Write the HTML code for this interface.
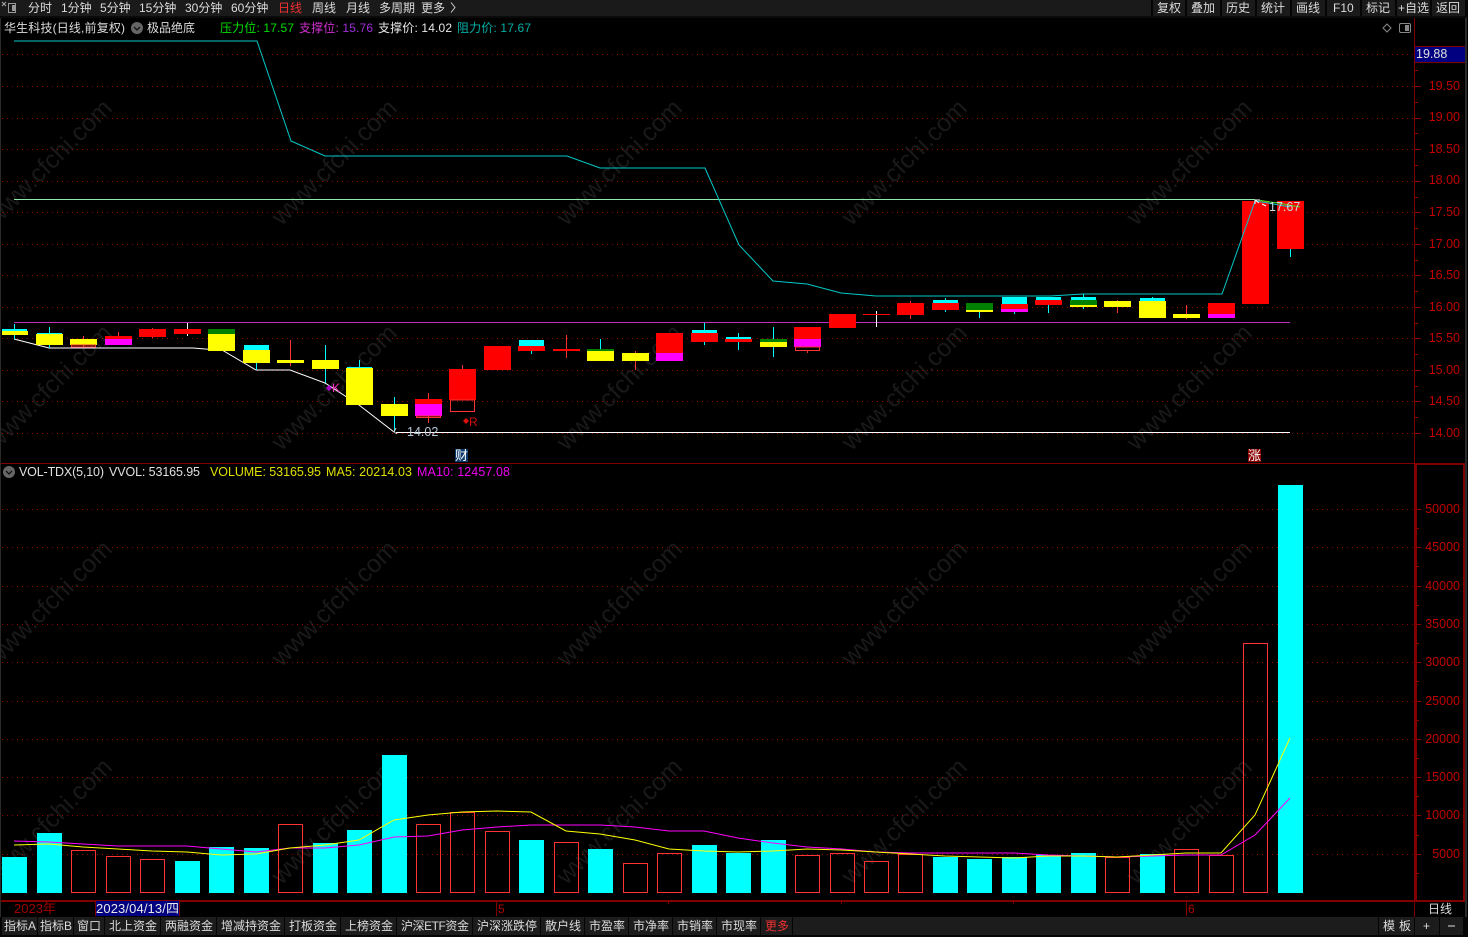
<!DOCTYPE html>
<html><head><meta charset="utf-8"><title>华生科技</title>
<style>
html,body{margin:0;padding:0;background:#000;width:1468px;height:937px;overflow:hidden}
svg{display:block;font-family:"Liberation Sans","Noto Sans CJK SC",sans-serif}
.t{font-size:12px;fill:#dcdcdc}
.w{font-size:25px;fill:#191919;text-anchor:middle}
.a{font-size:12.5px;fill:#c00000;text-anchor:end}
</style></head><body>
<svg width="1468" height="937" viewBox="0 0 1468 937" xmlns="http://www.w3.org/2000/svg">
<rect width="1468" height="937" fill="#000"/>

<!-- watermarks -->
<g class="w">
<text class="w" transform="translate(55,168) rotate(-45)">www.cfchi.com</text>
<text class="w" transform="translate(340,168) rotate(-45)">www.cfchi.com</text>
<text class="w" transform="translate(625,168) rotate(-45)">www.cfchi.com</text>
<text class="w" transform="translate(910,168) rotate(-45)">www.cfchi.com</text>
<text class="w" transform="translate(1195,168) rotate(-45)">www.cfchi.com</text>
<text class="w" transform="translate(55,393) rotate(-45)">www.cfchi.com</text>
<text class="w" transform="translate(340,393) rotate(-45)">www.cfchi.com</text>
<text class="w" transform="translate(625,393) rotate(-45)">www.cfchi.com</text>
<text class="w" transform="translate(910,393) rotate(-45)">www.cfchi.com</text>
<text class="w" transform="translate(1195,393) rotate(-45)">www.cfchi.com</text>
<text class="w" transform="translate(55,609) rotate(-45)">www.cfchi.com</text>
<text class="w" transform="translate(340,609) rotate(-45)">www.cfchi.com</text>
<text class="w" transform="translate(625,609) rotate(-45)">www.cfchi.com</text>
<text class="w" transform="translate(910,609) rotate(-45)">www.cfchi.com</text>
<text class="w" transform="translate(1195,609) rotate(-45)">www.cfchi.com</text>
<text class="w" transform="translate(55,827) rotate(-45)">www.cfchi.com</text>
<text class="w" transform="translate(340,827) rotate(-45)">www.cfchi.com</text>
<text class="w" transform="translate(625,827) rotate(-45)">www.cfchi.com</text>
<text class="w" transform="translate(910,827) rotate(-45)">www.cfchi.com</text>
<text class="w" transform="translate(1195,827) rotate(-45)">www.cfchi.com</text>
</g>

<!-- dotted grids -->
<g stroke="#900000" stroke-width="1" stroke-dasharray="1 4" shape-rendering="crispEdges">
<path d="M2 54.5H1414M2 86.5H1414M2 118.5H1414M2 149.5H1414M2 181.5H1414M2 212.5H1414M2 244.5H1414M2 275.5H1414M2 307.5H1414M2 338.5H1414M2 370.5H1414M2 401.5H1414M2 433.5H1414"/>
<path d="M2 509.5H1414M2 547.5H1414M2 586.5H1414M2 624.5H1414M2 662.5H1414M2 701.5H1414M2 739.5H1414M2 777.5H1414M2 815.5H1414M2 854.5H1414"/>
</g>

<!-- frame -->
<g fill="#800000" shape-rendering="crispEdges">
<rect x="0" y="463" width="1415" height="1"/>
<rect x="1414" y="18" width="1" height="900"/>
<rect x="1415" y="463" width="50" height="2"/>
<rect x="1415" y="463" width="2" height="438"/>
<rect x="1463" y="463" width="2" height="438"/>
<rect x="0" y="900" width="1465" height="2"/>
</g>
<rect x="0" y="18" width="1" height="900" fill="#2a2a2a"/>
<rect x="1465" y="18" width="2" height="899" fill="#2a2a2a"/>

<!-- axis ticks -->
<g stroke="#900000" shape-rendering="crispEdges">
<path d="M1415 86.5h6M1415 118.5h6M1415 149.5h6M1415 181.5h6M1415 212.5h6M1415 244.5h6M1415 275.5h6M1415 307.5h6M1415 338.5h6M1415 370.5h6M1415 401.5h6M1415 433.5h6"/>
<path d="M1415 70.5h3M1415 102.5h3M1415 133.5h3M1415 165.5h3M1415 197.5h3M1415 228.5h3M1415 260.5h3M1415 291.5h3M1415 323.5h3M1415 354.5h3M1415 386.5h3M1415 417.5h3"/>
<path d="M1416 509.5h5M1416 547.5h5M1416 586.5h5M1416 624.5h5M1416 662.5h5M1416 701.5h5M1416 739.5h5M1416 777.5h5M1416 815.5h5M1416 854.5h5"/>
<path d="M1416 528.5h3M1416 566.5h3M1416 605.5h3M1416 643.5h3M1416 681.5h3M1416 720.5h3M1416 758.5h3M1416 796.5h3M1416 835.5h3M1416 873.5h3"/>
</g>

<!-- axis labels -->
<text class="a" x="1460" y="90">19.50</text>
<text class="a" x="1460" y="121">19.00</text>
<text class="a" x="1460" y="153">18.50</text>
<text class="a" x="1460" y="184">18.00</text>
<text class="a" x="1460" y="216">17.50</text>
<text class="a" x="1460" y="248">17.00</text>
<text class="a" x="1460" y="279">16.50</text>
<text class="a" x="1460" y="311">16.00</text>
<text class="a" x="1460" y="342">15.50</text>
<text class="a" x="1460" y="374">15.00</text>
<text class="a" x="1460" y="405">14.50</text>
<text class="a" x="1460" y="437">14.00</text>
<text class="a" x="1460" y="513">50000</text>
<text class="a" x="1460" y="551">45000</text>
<text class="a" x="1460" y="590">40000</text>
<text class="a" x="1460" y="628">35000</text>
<text class="a" x="1460" y="666">30000</text>
<text class="a" x="1460" y="705">25000</text>
<text class="a" x="1460" y="743">20000</text>
<text class="a" x="1460" y="781">15000</text>
<text class="a" x="1460" y="819">10000</text>
<text class="a" x="1460" y="858">5000</text>

<!-- 19.88 box -->
<rect x="1415" y="47" width="50" height="15" fill="#000080"/>
<path d="M1415 46.5h50M1415 62.5h50" stroke="#800000" shape-rendering="crispEdges"/>
<text x="1416" y="58" font-size="12.5" fill="#e0e0e0">19.88</text>

<!-- horizontal level lines -->
<rect x="14" y="199" width="1241" height="1" fill="#8fe8a8"/>
<rect x="14" y="322" width="1276" height="1" fill="#c030c0"/>
<rect x="396" y="432" width="894" height="1" fill="#fff"/>

<!-- white support line -->
<polyline fill="none" stroke="#fff" stroke-width="1" points="14,339 49,348 193,348 205,349 222,350 256,370 290,370 325,383 359,405 394,432"/>

<!-- candles -->
<g shape-rendering="crispEdges">
<rect x="14" y="324" width="1" height="15" fill="#0ff"/><rect x="2" y="329" width="25" height="2" fill="#0ff"/><rect x="2" y="331" width="26" height="4" fill="#ff0"/>
<rect x="49" y="327" width="1" height="21" fill="#0ff"/><rect x="37" y="333" width="25" height="1" fill="#0ff"/><rect x="36" y="334" width="27" height="11" fill="#ff0"/>
<rect x="83" y="336" width="1" height="11" fill="#f33"/><rect x="70" y="339" width="27" height="6" fill="#ff0"/><rect x="71.5" y="345" width="24" height="2" fill="none" stroke="#f33"/>
<rect x="118" y="332" width="1" height="4" fill="#f33"/><rect x="105" y="336" width="27" height="3" fill="#f00"/><rect x="105" y="339" width="27" height="6" fill="#f0f"/>
<rect x="152" y="328" width="1" height="10" fill="#f33"/><rect x="139" y="329" width="27" height="8" fill="#f00"/>
<rect x="187" y="323" width="1" height="13" fill="#fff"/><rect x="174" y="329" width="27" height="5" fill="#f00"/>
<rect x="208" y="329" width="27" height="5" fill="#008000"/><rect x="208" y="334" width="27" height="17" fill="#ff0"/>
<rect x="256" y="363" width="1" height="7" fill="#0ff"/><rect x="244" y="345" width="25" height="5" fill="#0ff"/><rect x="243" y="350" width="27" height="13" fill="#ff0"/>
<rect x="290" y="340" width="1" height="26" fill="#f33"/><rect x="277" y="360" width="27" height="3" fill="#ff0"/>
<rect x="325" y="345" width="1" height="38" fill="#0ff"/><rect x="312" y="360" width="27" height="9" fill="#ff0"/>
<rect x="359" y="360" width="1" height="8" fill="#0ff"/><rect x="347" y="367" width="25" height="1" fill="#0ff"/><rect x="346" y="368" width="27" height="37" fill="#ff0"/>
<rect x="394" y="397" width="1" height="35" fill="#0ff"/><rect x="381" y="404" width="27" height="12" fill="#ff0"/>
<rect x="428" y="393" width="1" height="30" fill="#f33"/><rect x="415" y="399" width="27" height="5" fill="#f00"/><rect x="415" y="404" width="27" height="12" fill="#f0f"/><rect x="416.5" y="416" width="24" height="1.5" fill="none" stroke="#f33"/>
<rect x="462" y="365" width="1" height="4" fill="#f33"/><rect x="449" y="369" width="27" height="31" fill="#f00"/><rect x="450.5" y="400" width="24" height="11.5" fill="none" stroke="#f33"/>
<rect x="484" y="346" width="27" height="24" fill="#f00"/>
<rect x="531" y="351" width="1" height="3" fill="#0ff"/><rect x="519" y="340" width="25" height="6" fill="#0ff"/><rect x="518" y="346" width="27" height="5" fill="#f00"/>
<rect x="566" y="335" width="1" height="23" fill="#f33"/><rect x="553" y="349" width="27" height="2" fill="#f00"/>
<rect x="600" y="339" width="1" height="10" fill="#0ff"/><rect x="587" y="349" width="27" height="2" fill="#008000"/><rect x="587" y="351" width="27" height="10" fill="#ff0"/>
<rect x="635" y="351" width="1" height="19" fill="#f33"/><rect x="622" y="353" width="27" height="8" fill="#ff0"/>
<rect x="656" y="333" width="27" height="20" fill="#f00"/><rect x="656" y="353" width="27" height="8" fill="#f0f"/>
<rect x="704" y="323" width="1" height="22" fill="#0ff"/><rect x="692" y="330" width="25" height="3" fill="#0ff"/><rect x="691" y="333" width="27" height="9" fill="#f00"/>
<rect x="738" y="333" width="1" height="17" fill="#0ff"/><rect x="726" y="337" width="25" height="2" fill="#0ff"/><rect x="725" y="339" width="27" height="3" fill="#f00"/>
<rect x="773" y="327" width="1" height="30" fill="#0ff"/><rect x="760" y="339" width="27" height="3" fill="#008000"/><rect x="760" y="342" width="27" height="5" fill="#ff0"/>
<rect x="794" y="327" width="27" height="12" fill="#f00"/><rect x="794" y="339" width="27" height="8" fill="#f0f"/><rect x="795.5" y="347" width="24" height="3.5" fill="none" stroke="#f33"/><rect x="807" y="351" width="1" height="2" fill="#f33"/>
<rect x="829" y="314" width="27" height="14" fill="#f00"/>
<rect x="876" y="311" width="1" height="16" fill="#fff"/><rect x="863" y="314" width="27" height="1" fill="#f00"/>
<rect x="910" y="301" width="1" height="18" fill="#f33"/><rect x="897" y="303" width="27" height="12" fill="#f00"/>
<rect x="945" y="298" width="1" height="14" fill="#0ff"/><rect x="933" y="300" width="25" height="3" fill="#0ff"/><rect x="932" y="303" width="27" height="7" fill="#f00"/>
<rect x="979" y="312" width="1" height="6" fill="#0ff"/><rect x="966" y="303" width="27" height="7" fill="#008000"/><rect x="966" y="310" width="27" height="2" fill="#ff0"/>
<rect x="1014" y="312" width="1" height="2" fill="#0ff"/><rect x="1002" y="297" width="25" height="7" fill="#0ff"/><rect x="1001" y="304" width="27" height="5" fill="#f00"/><rect x="1001" y="309" width="27" height="3" fill="#f0f"/>
<rect x="1048" y="305" width="1" height="8" fill="#0ff"/><rect x="1036" y="297" width="25" height="3" fill="#0ff"/><rect x="1035" y="300" width="27" height="5" fill="#f00"/>
<rect x="1083" y="294" width="1" height="15" fill="#0ff"/><rect x="1071" y="297" width="25" height="3" fill="#0ff"/><rect x="1070" y="300" width="27" height="5" fill="#008000"/><rect x="1070" y="305" width="27" height="2" fill="#ff0"/>
<rect x="1117" y="300" width="1" height="13" fill="#f33"/><rect x="1104" y="301" width="27" height="6" fill="#ff0"/>
<rect x="1152" y="297" width="1" height="2" fill="#0ff"/><rect x="1140" y="298" width="25" height="3" fill="#0ff"/><rect x="1139" y="301" width="27" height="17" fill="#ff0"/>
<rect x="1186" y="305" width="1" height="14" fill="#f33"/><rect x="1173" y="314" width="27" height="4" fill="#ff0"/>
<rect x="1208" y="303" width="27" height="11" fill="#f00"/><rect x="1208" y="314" width="27" height="4" fill="#f0f"/>
<rect x="1242" y="201" width="27" height="103" fill="#f00"/>
<rect x="1290" y="249" width="1" height="8" fill="#0ff"/><rect x="1277" y="201" width="27" height="48" fill="#f00"/>
</g>

<!-- cyan resistance line -->
<polyline fill="none" stroke="#00c8c8" stroke-width="1" points="14,41 257,41 291,141 325,156 567,156 600,168 705,168 739,245 773,281 807,284 841,293 876,296 1050,296 1083,294 1222,294 1255,201 1268,203 1290,207"/>
<polyline fill="none" stroke="#40e020" stroke-width="1" points="1258,200 1270,202 1278,203 1300,207"/>

<!-- chart annotations -->
<path d="M1255 200l4 3m-4-3h5m-5 0v4M1262 204l4 2" stroke="#fff" fill="none"/>
<text x="1269" y="211" font-size="12.5" fill="#c8d8e0">17.67</text>
<text x="407" y="436" font-size="12.5" fill="#b8c8d8">14.02</text>
<path d="M396 428l-2 4 3 2" fill="none" stroke="#ccc"/>
<path d="M329 385l3 3-3 3-3-3z" fill="#b000d0"/>
<text x="332" y="392" font-size="12" fill="#ff30c0">K</text>
<path d="M466 418l3 3-3 3-3-3z" fill="#e01010"/>
<text x="469" y="426" font-size="12" fill="#d01010">R</text>

<!-- badges -->
<rect x="455" y="449" width="13" height="13" fill="#0a3a6a"/>
<text x="455" y="460" font-size="13" fill="#fff">财</text>
<rect x="1248" y="449" width="13" height="13" fill="#8a0000"/>
<text x="1248" y="460" font-size="13" fill="#fff">涨</text>

<!-- volume bars -->
<g fill="#0ff" shape-rendering="crispEdges">
<rect x="2" y="857" width="25" height="36"/>
<rect x="37" y="833" width="25" height="60"/>
<rect x="175" y="861" width="25" height="32"/>
<rect x="209" y="847" width="25" height="46"/>
<rect x="244" y="848" width="25" height="45"/>
<rect x="313" y="843" width="25" height="50"/>
<rect x="347" y="830" width="25" height="63"/>
<rect x="382" y="755" width="25" height="138"/>
<rect x="519" y="840" width="25" height="53"/>
<rect x="588" y="849" width="25" height="44"/>
<rect x="692" y="845" width="25" height="48"/>
<rect x="726" y="853" width="25" height="40"/>
<rect x="761" y="840" width="25" height="53"/>
<rect x="933" y="857" width="25" height="36"/>
<rect x="967" y="859" width="25" height="34"/>
<rect x="1002" y="857" width="25" height="36"/>
<rect x="1036" y="855" width="25" height="38"/>
<rect x="1071" y="853" width="25" height="40"/>
<rect x="1140" y="854" width="25" height="39"/>
<rect x="1278" y="485" width="25" height="408"/>
</g>
<g fill="none" stroke="#f33" shape-rendering="crispEdges">
<rect x="71.5" y="850.5" width="24" height="42"/>
<rect x="106.5" y="856.5" width="24" height="36"/>
<rect x="140.5" y="859.5" width="24" height="33"/>
<rect x="278.5" y="824.5" width="24" height="68"/>
<rect x="416.5" y="824.5" width="24" height="68"/>
<rect x="450.5" y="812.5" width="24" height="80"/>
<rect x="485.5" y="831.5" width="24" height="61"/>
<rect x="554.5" y="842.5" width="24" height="50"/>
<rect x="623.5" y="863.5" width="24" height="29"/>
<rect x="657.5" y="853.5" width="24" height="39"/>
<rect x="795.5" y="855.5" width="24" height="37"/>
<rect x="830.5" y="853.5" width="24" height="39"/>
<rect x="864.5" y="861.5" width="24" height="31"/>
<rect x="898.5" y="854.5" width="24" height="38"/>
<rect x="1105.5" y="857.5" width="24" height="35"/>
<rect x="1174.5" y="849.5" width="24" height="43"/>
<rect x="1209.5" y="855.5" width="24" height="37"/>
<rect x="1243.5" y="643.5" width="24" height="249"/>
</g>

<!-- MA lines -->
<polyline fill="none" stroke="#f0f" stroke-width="1" points="14,841 49,842 83,844 118,846 187,846 221,849 256,852 290,848 325,848 359,845 394,837 428,836 462,830 497,827 531,825 600,825 635,827 669,831 704,831 738,838 773,843 807,847 842,849 876,852 910,853 1014,853 1048,855 1083,856 1117,857 1152,856 1186,855 1221,855 1255,835 1290,798"/>
<polyline fill="none" stroke="#ff0" stroke-width="1" points="14,845 49,844 83,847 118,849 152,851 187,852 221,855 256,854 290,848 325,845 359,840 394,820 428,815 462,812 497,811 531,812 566,831 600,834 635,840 669,849 704,851 738,852 773,851 807,849 842,850 876,852 910,854 945,856 979,857 1014,858 1048,856 1083,856 1117,857 1152,855 1186,853 1221,853 1255,815 1290,738"/>

<!-- top toolbar -->
<rect x="0" y="0" width="1468" height="16" fill="#1a1a1a"/>
<rect x="0" y="16" width="1468" height="2" fill="#0a0a0a"/>
<path d="M2 2l4 4m0-4l-4 4" stroke="#aaa" fill="none"/>
<rect x="8.500" y="3.500" width="7" height="9" fill="none" stroke="#999"/>
<rect x="12" y="5" width="3" height="6" fill="#999"/>
<g class="t">
<text class="t" x="28" y="12">分时</text>
<text class="t" x="61" y="12">1分钟</text>
<text class="t" x="100" y="12">5分钟</text>
<text class="t" x="139" y="12">15分钟</text>
<text class="t" x="185" y="12">30分钟</text>
<text class="t" x="231" y="12">60分钟</text>
<text class="t" x="278" y="12" style="fill:#f03030">日线</text>
<text class="t" x="312" y="12">周线</text>
<text class="t" x="346" y="12">月线</text>
<text class="t" x="379" y="12">多周期</text>
<text class="t" x="421" y="12">更多</text>
<path d="M451 2.500l4 5-4 5" fill="none" stroke="#ccc"/>
</g>
<g fill="#050505">
<rect x="1151" y="0" width="2" height="16"/><rect x="1185" y="0" width="2" height="16"/><rect x="1220" y="0" width="2" height="16"/><rect x="1255" y="0" width="2" height="16"/><rect x="1290" y="0" width="2" height="16"/><rect x="1325" y="0" width="2" height="16"/><rect x="1360" y="0" width="2" height="16"/><rect x="1395" y="0" width="2" height="16"/><rect x="1430" y="0" width="2" height="16"/><rect x="1465" y="0" width="3" height="16"/>
</g>
<text class="t" x="1157" y="12">复权</text>
<text class="t" x="1191" y="12">叠加</text>
<text class="t" x="1226" y="12">历史</text>
<text class="t" x="1261" y="12">统计</text>
<text class="t" x="1296" y="12">画线</text>
<text class="t" x="1333" y="12">F10</text>
<text class="t" x="1366" y="12">标记</text>
<text class="t" x="1398" y="12">+自选</text>
<text class="t" x="1436" y="12">返回</text>

<!-- title row -->
<text class="t" x="4" y="32" textLength="121" lengthAdjust="spacing">华生科技(日线,前复权)</text>
<circle cx="137" cy="28" r="6" fill="#666"/>
<path d="M134 27l3 3 3-3" fill="none" stroke="#111" stroke-width="1.300"/>
<text class="t" x="147" y="32">极品绝底</text>
<text x="220" y="32" font-size="12" fill="#00e000" textLength="74">压力位: 17.57</text>
<text x="299" y="32" font-size="12" fill="#d030d0" textLength="74">支撑位: <tspan fill="#a030d8">15.76</tspan></text>
<text x="378" y="32" font-size="12" fill="#e8e8e8" textLength="74">支撑价: 14.02</text>
<text x="457" y="32" font-size="12" fill="#00b0a8" textLength="74">阻力价: 17.67</text>
<path d="M1387 24l4 4-4 4-4-4z" fill="none" stroke="#888"/>
<rect x="1399.500" y="23.500" width="11" height="9" rx="1.500" fill="none" stroke="#888"/>
<rect x="1405" y="25" width="4" height="6" fill="#888"/>

<!-- volume title -->
<circle cx="9" cy="472" r="6" fill="#666"/>
<path d="M6 471l3 3 3-3" fill="none" stroke="#111" stroke-width="1.300"/>
<text x="19" y="476" font-size="12.500" fill="#e0e0e0" textLength="85">VOL-TDX(5,10)</text>
<text x="109" y="476" font-size="12.500" fill="#e0e0e0" textLength="91">VVOL: 53165.95</text>
<text x="210" y="476" font-size="12.500" fill="#e0e000" textLength="111">VOLUME: 53165.95</text>
<text x="326" y="476" font-size="12.500" fill="#e0e000" textLength="86">MA5: 20214.03</text>
<text x="417" y="476" font-size="12.500" fill="#f000f0" textLength="93">MA10: 12457.08</text>

<!-- time axis -->
<text x="14" y="913" font-size="13" fill="#a00000">2023年</text>
<rect x="95" y="901" width="85" height="15" fill="#000080"/>
<rect x="95" y="901" width="1" height="15" fill="#800000"/><rect x="179" y="901" width="1" height="15" fill="#800000"/>
<text x="96" y="913" font-size="13" fill="#e8e8e8" textLength="83">2023/04/13/四</text>
<rect x="496" y="902" width="1" height="14" fill="#800000"/>
<text x="498" y="913" font-size="12" fill="#b00000">5</text>
<rect x="1186" y="902" width="1" height="14" fill="#800000"/>
<text x="1188" y="913" font-size="12" fill="#b00000">6</text>
<path d="M668.500 902v2M841.500 902v2M1013.500 902v2" stroke="#800000"/>
<text class="t" x="1428" y="913">日线</text>

<!-- bottom toolbar -->
<rect x="0" y="917" width="1468" height="18" fill="#1c1c1c"/>
<rect x="0" y="935" width="1468" height="2" fill="#050505"/>
<g fill="#050505">
<rect x="0" y="917" width="2" height="18"/><rect x="37" y="917" width="1" height="18"/><rect x="73" y="917" width="1" height="18"/><rect x="104" y="917" width="1" height="18"/><rect x="160" y="917" width="1" height="18"/><rect x="216" y="917" width="1" height="18"/><rect x="284" y="917" width="1" height="18"/><rect x="340" y="917" width="1" height="18"/><rect x="396" y="917" width="1" height="18"/><rect x="472" y="917" width="1" height="18"/><rect x="540" y="917" width="1" height="18"/><rect x="584" y="917" width="1" height="18"/><rect x="628" y="917" width="1" height="18"/><rect x="672" y="917" width="1" height="18"/><rect x="716" y="917" width="1" height="18"/><rect x="760" y="917" width="1" height="18"/><rect x="792" y="917" width="1" height="18"/><rect x="1378" y="917" width="1" height="18"/><rect x="1414" y="917" width="1" height="18"/><rect x="1439" y="917" width="1" height="18"/><rect x="1463" y="917" width="5" height="18"/>
</g>
<text class="t" x="4" y="930">指标A</text>
<text class="t" x="40" y="930">指标B</text>
<text class="t" x="77" y="930">窗口</text>
<text class="t" x="109" y="930">北上资金</text>
<text class="t" x="165" y="930">两融资金</text>
<text class="t" x="221" y="930">增减持资金</text>
<text class="t" x="289" y="930">打板资金</text>
<text class="t" x="345" y="930">上榜资金</text>
<text class="t" x="401" y="930" textLength="68">沪深ETF资金</text>
<text class="t" x="477" y="930">沪深涨跌停</text>
<text class="t" x="545" y="930">散户线</text>
<text class="t" x="589" y="930">市盈率</text>
<text class="t" x="633" y="930">市净率</text>
<text class="t" x="677" y="930">市销率</text>
<text class="t" x="721" y="930">市现率</text>
<text class="t" x="765" y="930" style="fill:#f03030">更多</text>
<text class="t" x="1383" y="930">模</text>
<text class="t" x="1399" y="930">板</text>
<text class="t" x="1423" y="930">+</text>
<path d="M1448 926h7" stroke="#ddd"/>
</svg>
</body></html>
